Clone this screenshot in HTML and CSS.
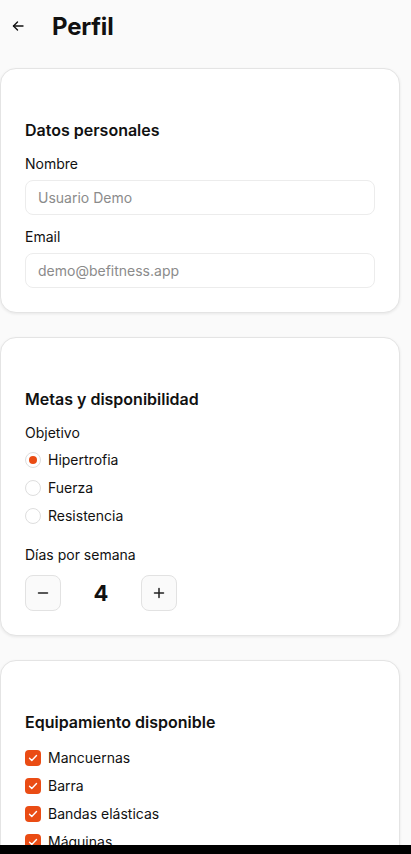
FILE: index.html
```html
<!DOCTYPE html>
<html lang="es">
<head>
  <meta charset="UTF-8" />
  <meta name="viewport" content="width=device-width, initial-scale=1.0" />
  <title>Perfil</title>
  <link rel="stylesheet" href="styles.css">
</head>
<body>
  <header class="top-bar">
    <button class="back-button" aria-label="Volver">
      <svg width="12" height="12" viewBox="0 0 12 12" fill="none" stroke="#111" stroke-width="1.4" stroke-linecap="round" stroke-linejoin="round">
        <path d="M11 6H1.5" />
        <path d="M5.5 2L1.5 6l4 4" />
      </svg>
    </button>
    <h1>Perfil</h1>
  </header>

  <main class="profile">
    <section class="card">
      <h2>Datos personales</h2>
      <div class="form-group">
        <label for="name">Nombre</label>
        <input type="text" id="name" placeholder="Usuario Demo" />
      </div>
      <div class="form-group">
        <label for="email">Email</label>
        <input type="email" id="email" placeholder="demo@befitness.app" />
      </div>
    </section>

    <section class="card">
      <h2>Metas y disponibilidad</h2>
      <div class="form-group">
        <span class="label goal-label">Objetivo</span>
        <div class="options">
          <label class="option"><span class="radio checked"></span>Hipertrofia</label>
          <label class="option"><span class="radio"></span>Fuerza</label>
          <label class="option"><span class="radio"></span>Resistencia</label>
        </div>
      </div>
      <div class="form-group days">
        <span class="label">Días por semana</span>
        <div class="stepper">
          <button class="step-button" aria-label="Menos">
            <svg width="14" height="14" viewBox="0 0 14 14" stroke="#222" stroke-width="1.5" stroke-linecap="round"><path d="M2.5 7h9" /></svg>
          </button>
          <span class="step-value">4</span>
          <button class="step-button" aria-label="Más">
            <svg width="14" height="14" viewBox="0 0 14 14" stroke="#222" stroke-width="1.5" stroke-linecap="round"><path d="M2.5 7h9M7 2.5v9" /></svg>
          </button>
        </div>
      </div>
    </section>

    <section class="card">
      <h2>Equipamiento disponible</h2>
      <div class="options equipment">
        <label class="option"><span class="checkbox"><svg width="10" height="10" viewBox="0 0 10 10" fill="none" stroke="#fff" stroke-width="1.4" stroke-linecap="round" stroke-linejoin="round"><path d="M1.5 5.2l2.3 2.3L8.5 2.5" /></svg></span>Mancuernas</label>
        <label class="option"><span class="checkbox"><svg width="10" height="10" viewBox="0 0 10 10" fill="none" stroke="#fff" stroke-width="1.4" stroke-linecap="round" stroke-linejoin="round"><path d="M1.5 5.2l2.3 2.3L8.5 2.5" /></svg></span>Barra</label>
        <label class="option"><span class="checkbox"><svg width="10" height="10" viewBox="0 0 10 10" fill="none" stroke="#fff" stroke-width="1.4" stroke-linecap="round" stroke-linejoin="round"><path d="M1.5 5.2l2.3 2.3L8.5 2.5" /></svg></span>Bandas elásticas</label>
        <label class="option"><span class="checkbox"><svg width="10" height="10" viewBox="0 0 10 10" fill="none" stroke="#fff" stroke-width="1.4" stroke-linecap="round" stroke-linejoin="round"><path d="M1.5 5.2l2.3 2.3L8.5 2.5" /></svg></span>Máquinas</label>
      </div>
    </section>
  </main>

  <div class="bottom-strip"></div>
</body>
</html>
```

FILE: styles.css
```css
body {
  font-family: Inter, 'Noto Sans', sans-serif;
  background-color: #fafafa;
  margin: 0;
  padding: 0;
  color: #111;
}

.top-bar {
  display: flex;
  align-items: center;
  height: 52px;
  padding-left: 12px;
  gap: 28px;
}

.back-button {
  display: flex;
  align-items: center;
  justify-content: center;
  width: 12px;
  height: 12px;
  padding: 0;
  border: none;
  background: none;
  cursor: pointer;
}

h1 {
  margin: 0;
  font-size: 24px;
  font-weight: 700;
  letter-spacing: -0.2px;
}

.profile {
  display: flex;
  flex-direction: column;
  gap: 24px;
  padding: 16px 11px 40px 0;
}

.card {
  background-color: white;
  border: 1px solid #e4e4e4;
  border-radius: 16px;
  box-shadow: 0 1px 3px rgba(0, 0, 0, 0.08);
  padding: 49px 24px 24px;
}

h2 {
  margin: 0 0 12px;
  font-size: 16px;
  line-height: 24px;
  font-weight: 600;
}

.form-group + .form-group {
  margin-top: 12px;
}

.form-group > label,
.label {
  display: block;
  font-size: 14px;
  line-height: 20px;
  margin-bottom: 6px;
  font-weight: 400;
}

.goal-label {
  margin-bottom: 7px;
}

input {
  width: 100%;
  height: 35px;
  padding: 0 12px;
  border: 1px solid #ececec;
  border-radius: 8px;
  font-family: inherit;
  font-size: 14px;
  box-sizing: border-box;
  background: white;
}

input::placeholder {
  color: #8b8b8b;
}

.options {
  display: flex;
  flex-direction: column;
  gap: 8px;
}

.equipment {
  margin-top: 14px;
}

.option {
  display: flex;
  align-items: center;
  gap: 7px;
  font-size: 14px;
  line-height: 20px;
}

.radio {
  width: 16px;
  height: 16px;
  border: 1px solid #dedede;
  border-radius: 50%;
  box-sizing: border-box;
  display: flex;
  align-items: center;
  justify-content: center;
}

.radio.checked::after {
  content: '';
  width: 8px;
  height: 8px;
  border-radius: 50%;
  background-color: #ea4c14;
}

.checkbox {
  width: 16px;
  height: 16px;
  border-radius: 4px;
  background-color: #ea4c14;
  display: flex;
  align-items: center;
  justify-content: center;
}

.days {
  margin-top: 19px !important;
}

.days .label {
  margin-bottom: 10px;
}

.stepper {
  display: flex;
  align-items: center;
}

.step-button {
  width: 36px;
  height: 36px;
  border: 1px solid #e2e2e2;
  border-radius: 8px;
  background-color: #fafafa;
  display: flex;
  align-items: center;
  justify-content: center;
  padding: 0;
  cursor: pointer;
}

.step-value {
  width: 80px;
  text-align: center;
  font-size: 22px;
  font-weight: 700;
}

.bottom-strip {
  position: fixed;
  left: 0;
  right: 0;
  bottom: 0;
  height: 9px;
  background-color: #000;
}
```
